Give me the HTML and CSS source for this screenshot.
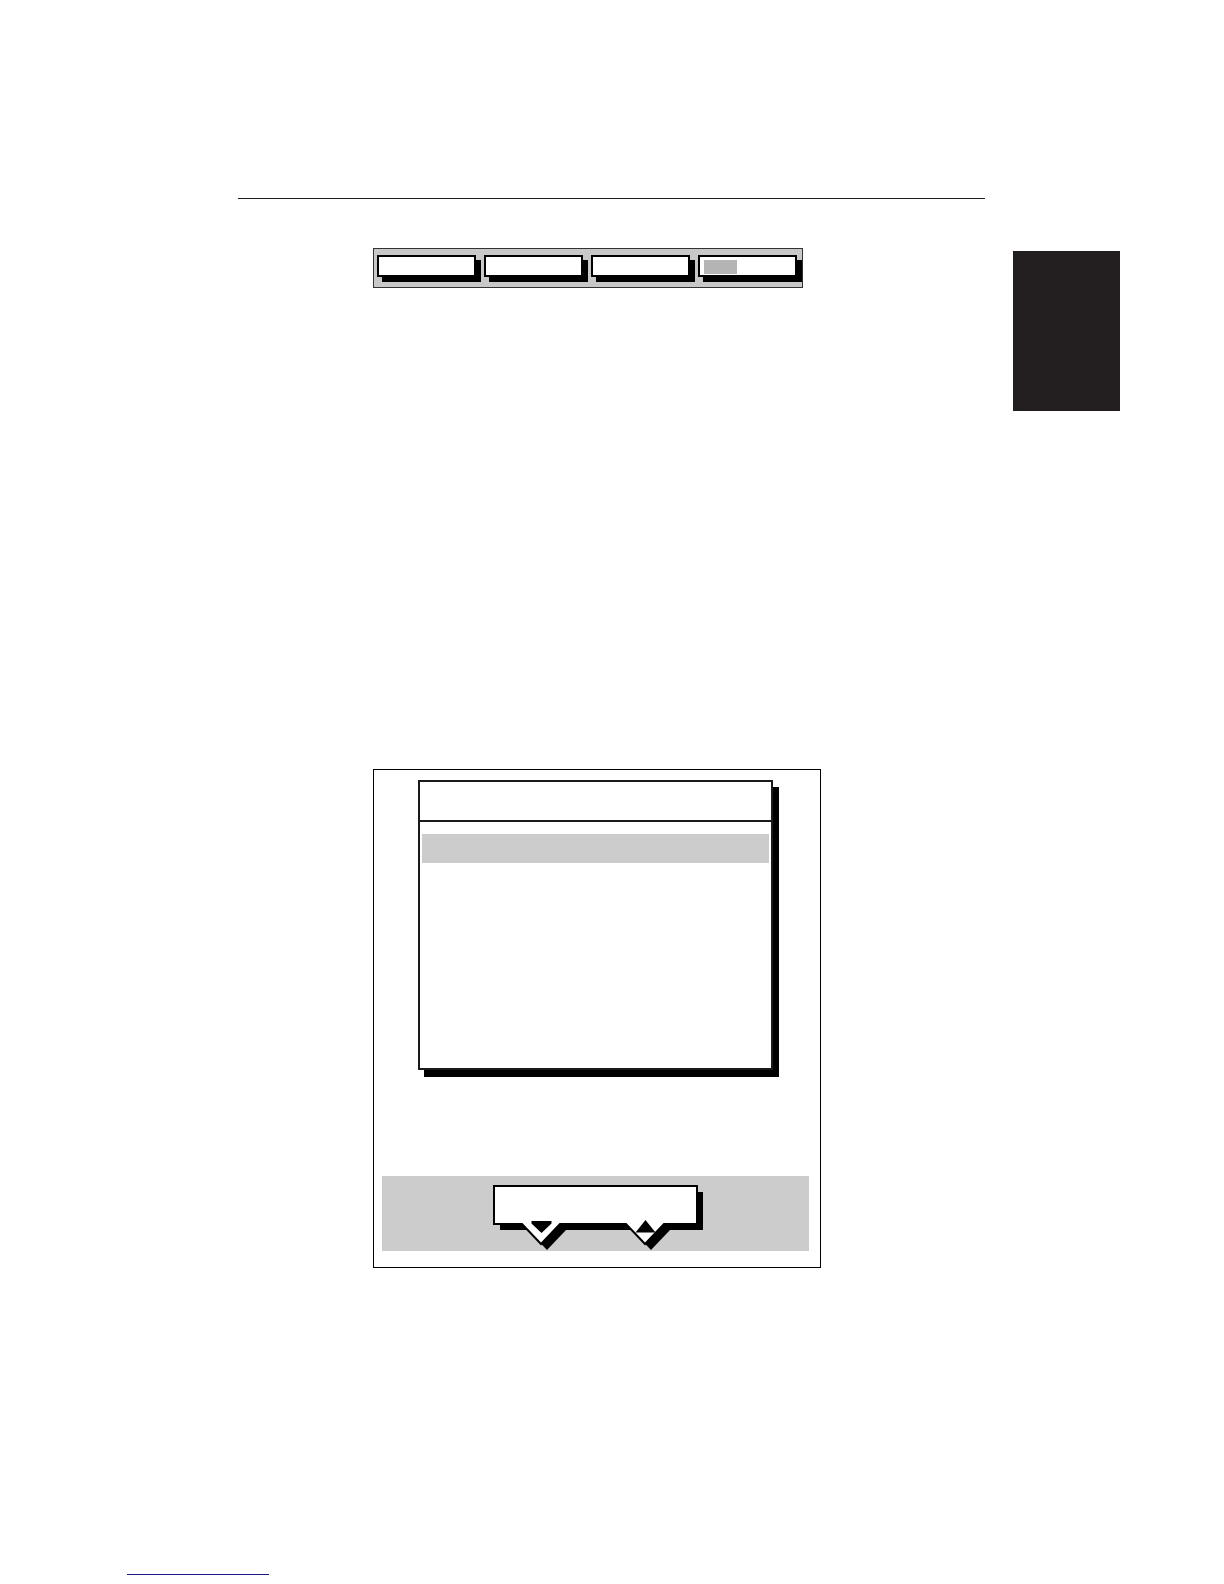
FILE: index.html
```html
<!DOCTYPE html>
<html lang="en">
<head>
<meta charset="utf-8">
<title>Display screen</title>
<link rel="stylesheet" href="styles.css">
</head>
<body>
<div class="page">
  <div class="rule"></div>
  <div class="toolbar">
    <div class="softbtn"></div>
    <div class="softbtn"></div>
    <div class="softbtn"></div>
    <div class="softbtn"><span class="softbtn-mark"></span></div>
  </div>
  <aside class="thumb-tab"></aside>
  <figure class="screen">
    <div class="listbox">
      <div class="listbox-title"></div>
      <div class="listbox-rows">
        <div class="row row-selected"></div>
        <div class="row"></div>
        <div class="row"></div>
        <div class="row"></div>
        <div class="row"></div>
        <div class="row"></div>
        <div class="row"></div>
      </div>
    </div>
    <div class="softkeys">
      <svg class="popup" width="217" height="66" viewBox="0 0 217 66">
        <path class="popup-shadow" transform="translate(6,6)" d="M1,1 H204 V39 H171 L152,59 L133,39 H67 L48,59 L29,39 H1 Z"/>
        <path class="popup-body" d="M1,1 H204 V39 H171 L152,59 L133,39 H67 L48,59 L29,39 H1 Z"/>
        <path class="popup-arrow" d="M38.5,36 H58.5 V38.5 L48.5,48 L38.5,38.5 Z"/>
        <path class="popup-arrow" d="M142.5,47.5 H162.5 L152.5,35 Z"/>
      </svg>
    </div>
  </figure>
  <div class="link-line"></div>
</div>
</body>
</html>
```
FILE: styles.css
```css
html, body {
  margin: 0;
  padding: 0;
  background: #ffffff;
}

.page {
  position: relative;
  width: 1224px;
  height: 1584px;
  overflow: hidden;
  padding-top: 198px;
  box-sizing: border-box;
  font-family: "Liberation Sans", Arial, sans-serif;
}

.rule {
  margin-left: 238px;
  width: 747px;
  border-top: 1px solid #231f20;
}

.toolbar {
  margin: 49px 0 0 373px;
  width: 430px;
  height: 40px;
  box-sizing: border-box;
  border: 1px solid #333333;
  background: #c8c8c8;
  display: flex;
  gap: 8px;
  padding: 6px 0 0 3px;
}

.softbtn {
  width: 99px;
  height: 22px;
  box-sizing: border-box;
  border: 2px solid #000000;
  background: #ffffff;
  box-shadow: 5px 5px 0 #000000;
  padding: 3px 0 0 4px;
}

.softbtn-mark {
  display: block;
  width: 33px;
  height: 14px;
  background: #b4b4b4;
}

.thumb-tab {
  position: absolute;
  left: 1013px;
  top: 251px;
  width: 107px;
  height: 160px;
  background: #231f20;
}

.screen {
  margin: 481px 0 0 373px;
  width: 448px;
  height: 499px;
  box-sizing: border-box;
  border: 1px solid #000000;
  background: #ffffff;
  display: flex;
  flex-direction: column;
  padding: 10px 0 16px 0;
}

.listbox {
  margin-left: 44px;
  width: 355px;
  height: 290px;
  box-sizing: border-box;
  border: 2px solid #1a1a1a;
  background: #ffffff;
  box-shadow: 6px 7px 0 #000000;
}

.listbox-title {
  height: 38px;
  border-bottom: 2px solid #1a1a1a;
}

.listbox-rows {
  padding: 12px 2px 0 2px;
}

.row {
  height: 29px;
}

.row-selected {
  background: #cccccc;
}

.softkeys {
  margin: auto 0 0 8px;
  width: 427px;
  height: 75px;
  box-sizing: border-box;
  background: #cccccc;
  padding: 9px 0 0 111px;
}

.popup {
  display: block;
  overflow: visible;
}

.popup-shadow {
  fill: #000000;
}

.popup-body {
  fill: #ffffff;
  stroke: #000000;
  stroke-width: 2;
  stroke-linejoin: miter;
}

.popup-arrow {
  fill: #000000;
}

.link-line {
  margin: 306px 0 0 127px;
  width: 142px;
  border-top: 1px solid #1b1b8e;
}
```
